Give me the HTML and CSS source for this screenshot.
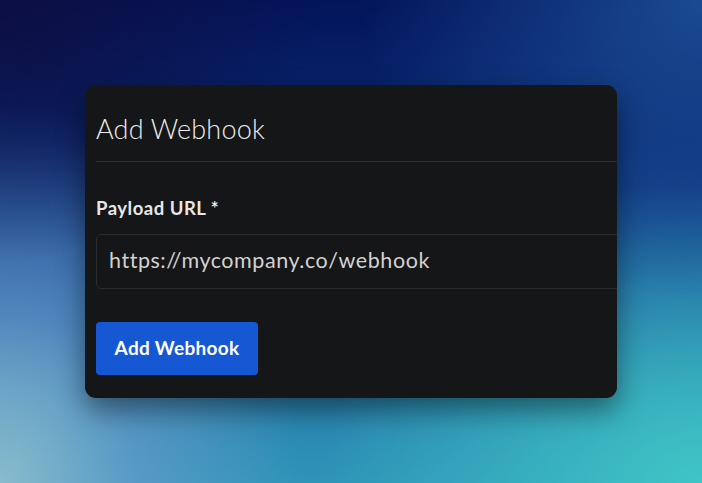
FILE: index.html
```html
<!DOCTYPE html>
<html>
<head>
<meta charset="utf-8">
<link rel="stylesheet" href="styles.css">
</head>
<body>
  <div class="card">
    <div class="header">
      <h1 class="title">Add Webhook</h1>
    </div>
    <div class="body">
      <label class="label" for="url">Payload URL *</label>
      <div class="input" id="url">https://mycompany.co/webhook</div>
      <button class="btn">Add Webhook</button>
    </div>
  </div>
</body>
</html>
```
FILE: styles.css
```css
html, body {
  margin: 0;
  padding: 0;
}
body {
  width: 702px;
  height: 483px;
  overflow: hidden;
  box-sizing: border-box;
  padding: 85px 0 0 85px;
  font-family: Lato, "Open Sans", sans-serif;
  background:
    radial-gradient(ellipse 320px 260px at 0% 0%, rgba(14,14,64,0.9), rgba(14,14,64,0) 100%),
    radial-gradient(ellipse 340px 300px at 100% 0%, rgba(30,84,156,0.85), rgba(30,84,156,0) 100%),
    radial-gradient(ellipse 300px 380px at 0% 100%, rgba(140,190,205,0.95), rgba(120,160,210,0.55) 45%, rgba(100,140,200,0) 100%),
    radial-gradient(ellipse 380px 300px at 100% 100%, rgba(64,200,198,0.95), rgba(64,200,198,0) 100%),
    linear-gradient(180deg, #03145a 0%, #0a2a74 30%, #1d5c9e 60%, #2a85b0 85%, #2e94b8 100%);
}
.card {
  width: 532px;
  height: 313px;
  box-sizing: border-box;
  background: #151618;
  border-radius: 11px;
  overflow: hidden;
  padding-left: 11px;
  box-shadow: 0 12px 28px rgba(0,0,0,0.45);
}
.header {
  height: 76px;
  border-bottom: 1px solid #2c2d30;
  display: flex;
  align-items: flex-end;
}
.title {
  margin: 0 0 16px 0;
  font-weight: 300;
  font-size: 27px;
  line-height: 32px;
  letter-spacing: 0.2px;
  color: #ececec;
}
.body {
  display: flex;
  flex-direction: column;
  align-items: flex-start;
  padding-top: 35px;
}
.label {
  font-weight: 700;
  font-size: 18.5px;
  line-height: 22px;
  letter-spacing: 0.5px;
  color: #e6e6e6;
}
.input {
  margin-top: 15px;
  width: 560px;
  height: 55px;
  box-sizing: border-box;
  border: 1px solid #2b2c2f;
  border-radius: 5px;
  padding: 0 0 3px 12px;
  display: flex;
  align-items: center;
  font-size: 21.5px;
  letter-spacing: 0.55px;
  color: #d2d2d2;
}
.btn {
  margin-top: 33px;
  width: 162px;
  height: 53px;
  border: 0;
  border-radius: 4px;
  background: #1657d3;
  color: #fff;
  font-family: Lato, sans-serif;
  font-weight: 700;
  font-size: 19px;
  letter-spacing: 0.3px;
  padding: 0 0 3px 0;
}
```
